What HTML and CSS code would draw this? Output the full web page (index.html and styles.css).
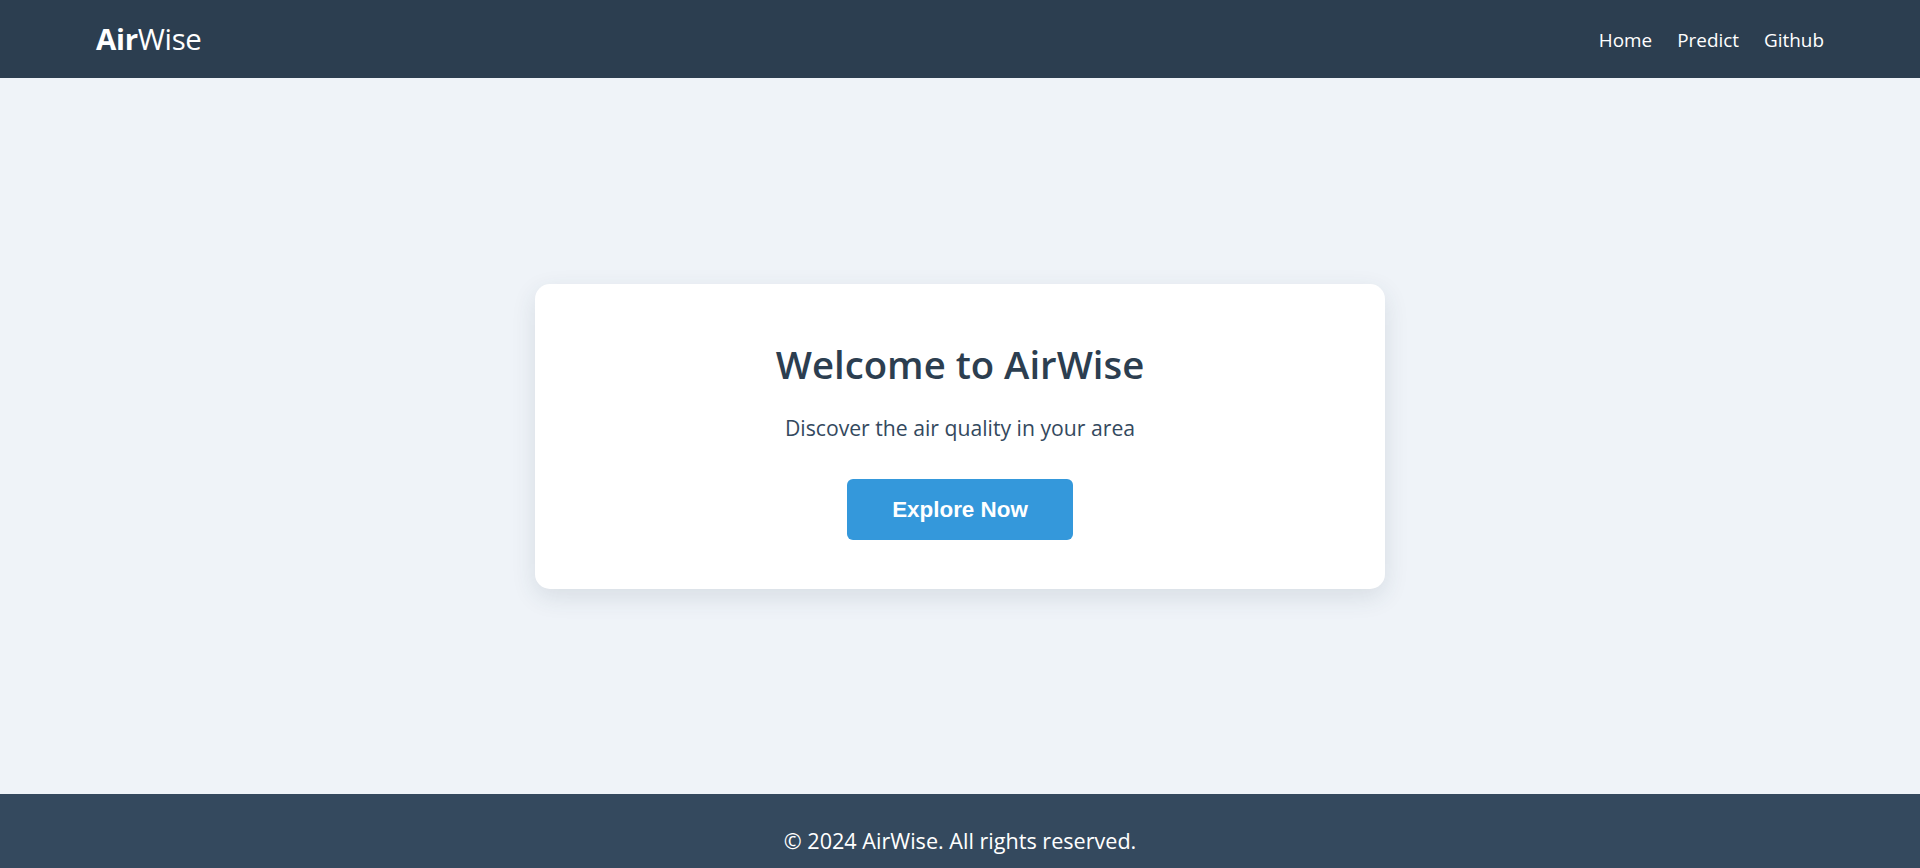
FILE: index.html
```html
<!DOCTYPE html>
<html lang="en">
<head>
<meta charset="utf-8">
<title>AirWise</title>
<link rel="stylesheet" href="styles.css">
</head>
<body>
<header class="topbar">
  <a class="logo" href="#"><b>Air</b>Wise</a>
  <nav class="nav">
    <a href="#">Home</a>
    <a href="#">Predict</a>
    <a href="#">Github</a>
  </nav>
</header>
<main class="hero">
  <section class="card">
    <h1 class="card-title">Welcome to AirWise</h1>
    <p class="card-sub">Discover the air quality in your area</p>
    <a class="btn" href="#">Explore Now</a>
  </section>
</main>
<footer class="footer">
  <p>&copy; 2024 AirWise. All rights reserved.</p>
</footer>
</body>
</html>
```
FILE: styles.css
```css
* { box-sizing: border-box; }
html, body { margin: 0; padding: 0; }
body {
  font-family: "Open Sans", "Noto Sans", sans-serif;
  background: #eff3f8;
  color: #2c3e50;
}
a { text-decoration: none; color: inherit; }

.topbar {
  height: 78px;
  background: #2c3e50;
  display: flex;
  align-items: center;
  justify-content: space-between;
  padding: 0 96px;
  color: #ffffff;
}
.logo {
  font-size: 29.4px;
  font-weight: 400;
  color: #ffffff;
  letter-spacing: -0.3px;
}
.logo b { font-weight: 700; }
.nav {
  display: flex;
  gap: 25px;
  padding-top: 2px;
}
.nav a {
  font-size: 18.9px;
  color: #ffffff;
}

.hero {
  min-height: 716px;
  display: flex;
  align-items: center;
  justify-content: center;
}
.card {
  width: 850px;
  background: #ffffff;
  border-radius: 15px;
  box-shadow: 0 8px 24px rgba(44, 62, 80, 0.12);
  padding: 56px 48px 49px;
  text-align: center;
}
.card-title {
  margin: 0;
  font-size: 38.3px;
  line-height: 48px;
  font-weight: 600;
  color: #2c3e50;
}
.card-sub {
  margin: 25px 0 37px;
  font-size: 21.2px;
  line-height: 29px;
  color: #34495e;
}
.btn {
  display: inline-block;
  background: #3498db;
  color: #ffffff;
  font-family: "Liberation Sans", Arial, sans-serif;
  font-weight: 700;
  font-size: 22.4px;
  line-height: 61px;
  padding: 0 44.8px;
  border-radius: 6px;
}

.footer {
  background: #34495e;
  color: #ffffff;
  text-align: center;
  padding: 33px 0 33px;
}
.footer p {
  margin: 0;
  font-size: 21.6px;
  line-height: 28.8px;
}
```
